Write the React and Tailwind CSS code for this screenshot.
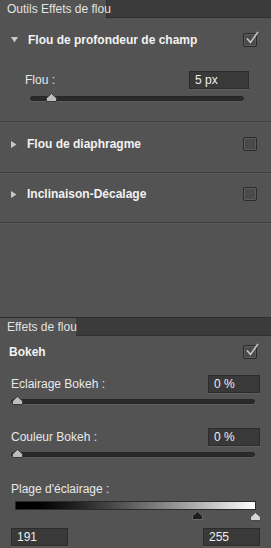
import React from 'react';

const font = { fontFamily: '"Liberation Sans", Arial, sans-serif' };

const CheckBox = ({ checked }) => (
  <div className="relative w-[14px] h-[14px] rounded-[2px] border border-[#2b2b2b] bg-[#4a4a4a] shadow-[inset_0_0_0_1px_#5c5c5c]">
    {checked && (
      <svg className="absolute -top-[3px] left-[1px]" width="14" height="14" viewBox="0 0 14 14">
        <path d="M2.5 8 L5.5 11.5 L12.5 1.5" fill="none" stroke="#c4c4c4" strokeWidth="1.6" strokeLinecap="square" />
      </svg>
    )}
  </div>
);

const Arrow = ({ open }) =>
  open ? (
    <svg width="7" height="6" viewBox="0 0 7 6" className="shrink-0">
      <path d="M0 0 H7 L3.5 5.5 Z" fill="#c9c9c9" />
    </svg>
  ) : (
    <svg width="6" height="7" viewBox="0 0 6 7" className="shrink-0">
      <path d="M0 0 V7 L5.5 3.5 Z" fill="#c9c9c9" />
    </svg>
  );

const Thumb = ({ fill = '#bdbdbd', stroke = '#3a3a3a' }) => (
  <svg width="11" height="9" viewBox="0 0 11 9">
    <path d="M0.5 8.5 V5 L5.5 0.5 L10.5 5 V8.5 Z" fill={fill} stroke={stroke} strokeWidth="1" />
  </svg>
);

const Slider = ({ left, className }) => (
  <div className={`relative h-[5px] rounded-full bg-[#2a2a2a] border border-[#262626] shadow-[0_1px_0_#5e5e5e] ${className}`}>
    <div className="absolute -top-[4px]" style={{ left }}>
      <Thumb />
    </div>
  </div>
);

const Field = ({ value, className }) => (
  <div className={`h-[18px] bg-[#393939] border border-[#2c2c2c] shadow-[0_1px_0_#5f5f5f] flex items-center pl-[5px] text-[12px] text-[#efefef] ${className}`}>
    {value}
  </div>
);

const Section = ({ title, open, checked }) => (
  <div className="flex items-center h-[14px] pl-[11px] pr-[14px]">
    <Arrow open={open} />
    <span className="ml-[10px] text-[12px] font-bold text-[#f2f2f2] flex-1 whitespace-nowrap">{title}</span>
    <CheckBox checked={checked} />
  </div>
);

const TabBar = ({ label, width }) => (
  <div className="flex h-[19px] bg-[#3b3b3b] border-t border-[#2f2f2f]">
    <div className={`${width} bg-[#535353] text-[12px] text-[#e2e2e2] flex items-center pl-[7px] whitespace-nowrap`}>{label}</div>
    <div className="flex-1 border-b border-[#2f2f2f]" />
  </div>
);

export default function App() {
  return (
    <div className="w-[271px] h-[548px] bg-[#535353] overflow-hidden select-none" style={font}>
      {/* top tab */}
      <div className="flex h-[18px] bg-[#3b3b3b]">
        <div className="w-[107px] bg-[#535353] text-[12px] text-[#e2e2e2] flex items-center pl-[7px] border-r border-[#2f2f2f] whitespace-nowrap">
          Outils Effets de flou
        </div>
        <div className="flex-1 border-b border-[#2f2f2f]" />
      </div>

      {/* Flou de profondeur de champ */}
      <div className="pt-[15px] pb-[20px] border-b border-[#3d3d3d]">
        <Section title="Flou de profondeur de champ" open checked />
        <div className="flex items-center justify-between mt-[24px] pl-[25px] pr-[22px]">
          <span className="text-[12px] text-[#e8e8e8]">Flou :</span>
          <Field value="5 px" className="w-[60px]" />
        </div>
        <Slider left="15px" className="mt-[7px] ml-[30px] mr-[27px]" />
      </div>

      {/* Flou de diaphragme */}
      <div className="pt-[14px] pb-[21px] border-b border-[#3d3d3d] border-t border-t-[#5a5a5a]">
        <Section title="Flou de diaphragme" />
      </div>

      {/* Inclinaison-Décalage */}
      <div className="pt-[13px] pb-[21px] border-b border-[#3d3d3d] border-t border-t-[#5a5a5a]">
        <Section title="Inclinaison-Décalage" />
      </div>

      <div className="h-[94px] border-t border-[#5a5a5a]" />

      {/* Effets de flou */}
      <TabBar label="Effets de flou" width="w-[76px]" />

      <div className="pt-[7px] pl-[9px] pr-[14px] flex items-center justify-between">
        <span className="text-[12px] font-bold text-[#f2f2f2]">Bokeh</span>
        <CheckBox checked />
      </div>

      <div className="flex items-center justify-between mt-[14px] pl-[11px] pr-[11px]">
        <span className="text-[12px] text-[#e8e8e8]">Eclairage Bokeh :</span>
        <Field value="0 %" className="w-[52px]" />
      </div>
      <Slider left="0px" className="mt-[6px] ml-[11px] mr-[16px]" />

      <div className="flex items-center justify-between mt-[24px] pl-[11px] pr-[11px]">
        <span className="text-[12px] text-[#e8e8e8]">Couleur Bokeh :</span>
        <Field value="0 %" className="w-[52px]" />
      </div>
      <Slider left="0px" className="mt-[6px] ml-[11px] mr-[16px]" />

      <div className="mt-[23px] pl-[11px] text-[12px] text-[#e8e8e8]">Plage d'éclairage :</div>
      <div className="relative mt-[3px] ml-[15px] mr-[15px]">
        <div className="h-[9px] border border-[#2a2a2a] bg-gradient-to-r from-[#000000] to-[#ffffff]" />
        <div className="relative h-[10px]">
          <div className="absolute top-[1px] left-[177px]">
            <Thumb fill="#1e1e1e" stroke="#6a6a6a" />
          </div>
          <div className="absolute top-[2px] left-[235px]">
            <Thumb fill="#d4d4d4" stroke="#4a4a4a" />
          </div>
        </div>
      </div>

      <div className="flex justify-between mt-[8px] pl-[11px] pr-[11px]">
        <Field value="191" className="w-[57px]" />
        <Field value="255" className="w-[57px]" />
      </div>
    </div>
  );
}
